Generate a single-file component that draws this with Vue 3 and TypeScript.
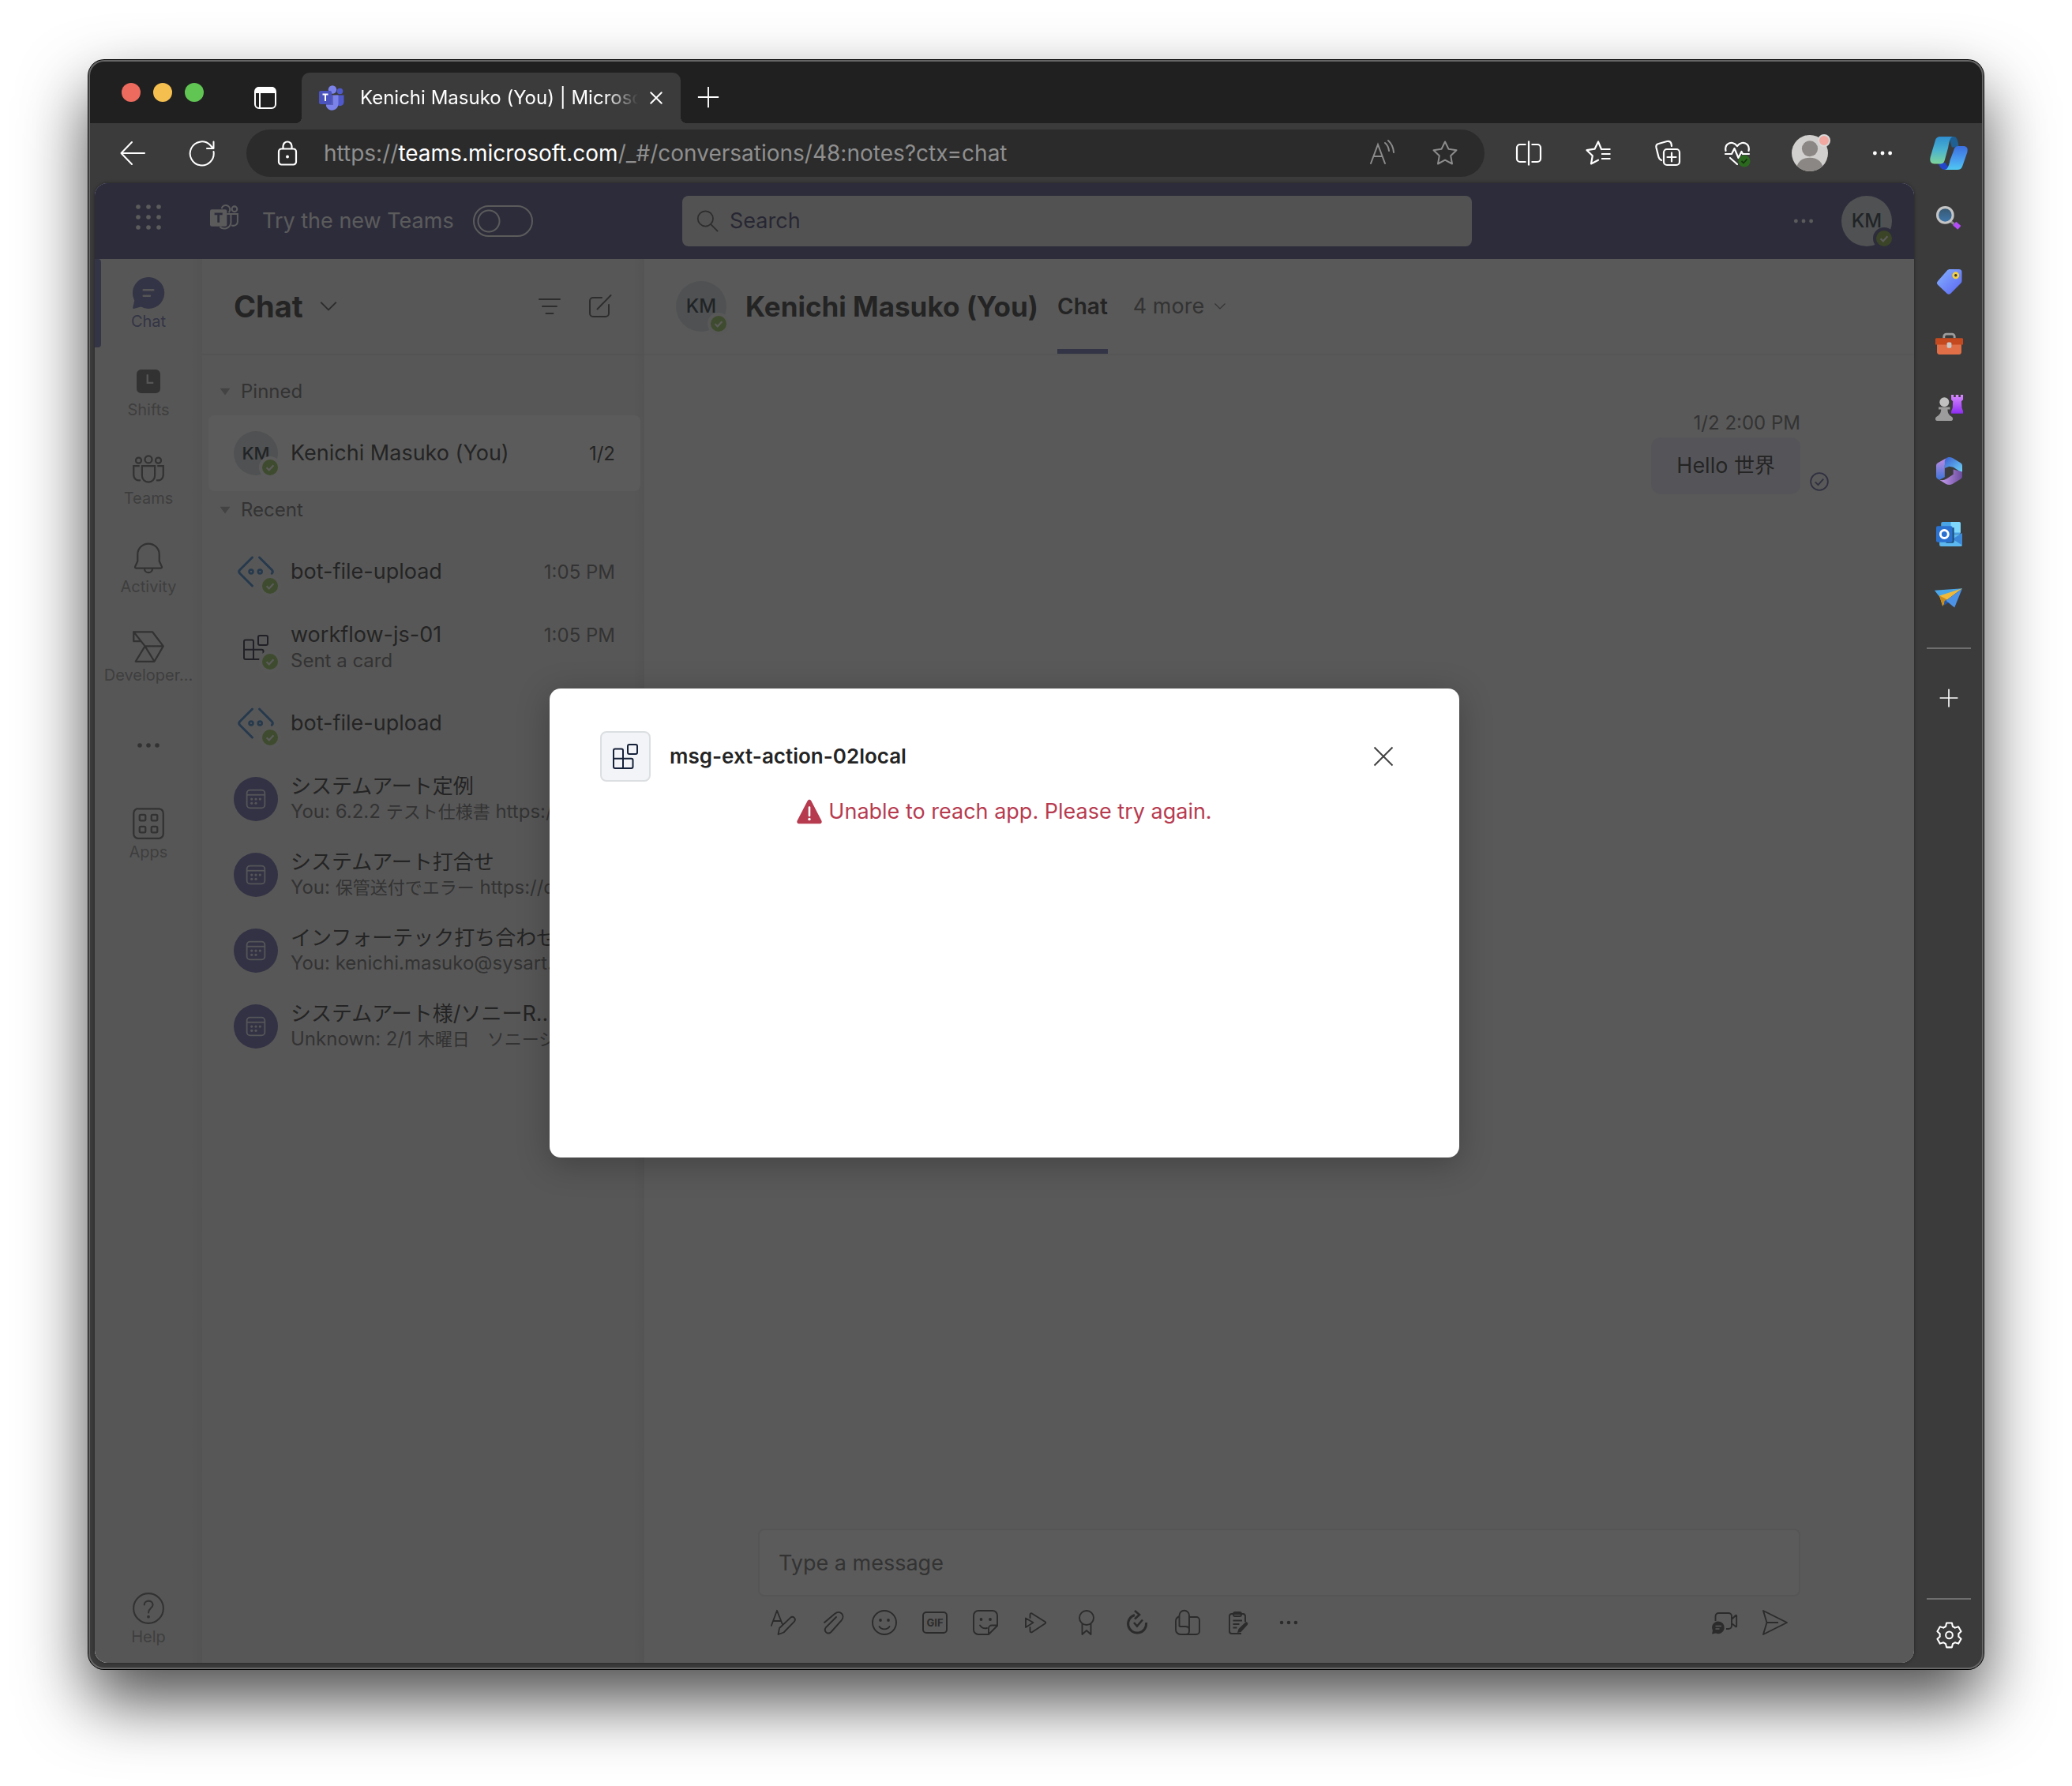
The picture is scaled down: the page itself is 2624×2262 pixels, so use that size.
<script setup lang="ts">
import { ref } from 'vue'

interface RailItem { id: string; label: string; icon: string; active?: boolean }
interface Chat {
  id: number
  avatar: 'initials' | 'bot' | 'app' | 'meeting'
  title: string
  preview?: string
  time?: string
}
interface Run { text: string; ja: boolean }

// Every glyph is drawn on a 32 x 32 grid and inherits currentColor.
const icons: Record<string, string> = {
  tabs: '<rect x="3" y="3" width="26" height="26" rx="5" fill="none" stroke="currentColor" stroke-width="2"/><path d="M3 10V7a5 5 0 0 1 5-5h16a5 5 0 0 1 5 5v3z" fill="currentColor"/><path d="M9 10v18" stroke="currentColor" stroke-width="2"/>',
  teamsColor: '<circle cx="26.500" cy="7.500" r="3.800" fill="#5059c9"/><path d="M21 12.500h10.500v9a5 5 0 0 1-7.500 4z" fill="#5059c9"/><circle cx="17" cy="5.500" r="5.200" fill="#7b83eb"/><path d="M9 12.500h15.500v11a8 8 0 0 1-15.500 3z" fill="#7b83eb"/><path d="M10 12.500h8v12.500H9z" fill="#454a9c" opacity=".6"/><rect x="0" y="7" width="16" height="17" rx="2" fill="#4b53bc"/><path d="M4.500 11.500h7M8 11.500V20" stroke="#fff" stroke-width="2"/>',
  close: '<path d="M4 4l24 24M28 4L4 28" stroke="currentColor" stroke-width="3.500" stroke-linecap="round"/>',
  closeThin: '<path d="M4.500 4.500l23 23M27.500 4.500l-23 23" stroke="currentColor" stroke-width="2"/>',
  plus: '<path d="M16 2v28M2 16h28" stroke="currentColor" stroke-width="2"/>',
  back: '<path d="M31 16H1.500M15 2L1.500 16 15 30" fill="none" stroke="currentColor" stroke-width="2" stroke-linecap="round" stroke-linejoin="round"/>',
  refresh: '<path d="M30.500 14A15 15 0 1 1 26 5.500l4 4.500M30.500 1.500V10H22" fill="none" stroke="currentColor" stroke-width="2" stroke-linecap="round" stroke-linejoin="round"/>',
  lock: '<rect x="5" y="10.500" width="22" height="20" rx="3.500" fill="none" stroke="currentColor" stroke-width="2.200"/><path d="M10.500 10.500V7a5.500 5.500 0 0 1 11 0v3.500" fill="none" stroke="currentColor" stroke-width="2.200"/><circle cx="16" cy="20.500" r="2" fill="currentColor"/>',
  readAloud: '<path d="M2 29L11 5l9 24M5.500 20h11M20 3c3 2.500 4.500 5.500 5 10M24 0c4.500 4 6.500 8 7 15" fill="none" stroke="currentColor" stroke-width="2" stroke-linecap="round"/>',
  star: '<path d="M16 1.500l4.500 9.200 10 1.500-7.300 7.100 1.800 10.200-9-4.800-9 4.800 1.800-10.200-7.300-7.100 10-1.500z" fill="none" stroke="currentColor" stroke-width="2" stroke-linejoin="round"/>',
  split: '<path d="M12.500 5H5a4 4 0 0 0-4 4v14a4 4 0 0 0 4 4h7.500M19.500 5H27a4 4 0 0 1 4 4v14a4 4 0 0 1-4 4h-7.500M16 .5v31" fill="none" stroke="currentColor" stroke-width="2.200"/>',
  favorites: '<path d="M20 11l-4-9.500-4.500 9.200-10 1.500 7.300 7.100L7 29.500l9-4.800" fill="none" stroke="currentColor" stroke-width="2.200" stroke-linejoin="round" stroke-linecap="round"/><path d="M20 11h11.500M20 17h11.500M20 23h11.500" stroke="currentColor" stroke-width="2.200"/>',
  collections: '<rect x="11" y="11" width="20" height="20" rx="4" fill="none" stroke="currentColor" stroke-width="2.200"/><path d="M21 15.500v11M15.500 21h11M8 25c-2-1-3-2-3.500-4L1.500 9c-.5-2.500.5-4.500 3-5L15 1c3-.6 4.800.4 5.500 3L21 7" fill="none" stroke="currentColor" stroke-width="2.200" stroke-linecap="round"/>',
  health: '<path d="M1.500 13C0 6 5 2 10 3c3 .7 4.500 2 6 4 1.500-2 3-3.300 6-4 5-1 10 3 8.500 10M1 17h8l3.500-7 5 12 4-8 1.500 3h8M7 22l9 8" fill="none" stroke="currentColor" stroke-width="2.200" stroke-linejoin="round" stroke-linecap="round"/><circle cx="25" cy="26" r="7.500" fill="#2b6a1e"/><path d="M21.500 26l2.500 2.500 4.500-5" fill="none" stroke="#16330f" stroke-width="1.800"/>',
  dots: '<g fill="currentColor"><circle cx="5" cy="16" r="2.800"/><circle cx="16" cy="16" r="2.800"/><circle cx="27" cy="16" r="2.800"/></g>',
  person: '<defs><clipPath id="pc"><circle cx="16" cy="16" r="16"/></clipPath></defs><g clip-path="url(#pc)"><rect width="32" height="32" fill="#d2d0ce"/><circle cx="16" cy="12" r="7" fill="#8a8784"/><path d="M4 32c0-8 5-12 12-12s12 4 12 12z" fill="#8a8784"/></g>',
  copilot: '<defs><linearGradient id="c1" x1="0" y1="0" x2="0" y2="1"><stop offset="0" stop-color="#2f8fd0"/><stop offset=".5" stop-color="#4bb3d0"/><stop offset="1" stop-color="#7ed49a"/></linearGradient><linearGradient id="c2" x1="0" y1="0" x2="0" y2="1"><stop offset="0" stop-color="#3c6fe0"/><stop offset=".6" stop-color="#4aa0f0"/><stop offset="1" stop-color="#4fc8f0"/></linearGradient></defs><path d="M16 2h4c3 0 3.500 3 4.500 9h-6z" fill="#1f5f92"/><path d="M7 24h6l4 6h-4c-3.500 0-4.500-2-6-6z" fill="#2347c8"/><path d="M9 2h11c-3 0-3.500 4-4.500 9l-3 11c-.6 2-1.500 3-4 3H4c-3 0-4.500-2-3.500-6L4.500 5.500C5.200 3 6.500 2 9 2z" fill="url(#c1)"/><path d="M23 30H12c3 0 4-3 5-8l3-8c.6-2 1.500-4 4-4h4c3 0 4.500 1.500 3.500 5.500L27.500 27c-.7 2-2 3-4.500 3z" fill="url(#c2)"/>',
  grid: '<g fill="currentColor"><circle cx="3" cy="3" r="2.800"/><circle cx="16" cy="3" r="2.800"/><circle cx="29" cy="3" r="2.800"/><circle cx="3" cy="16" r="2.800"/><circle cx="16" cy="16" r="2.800"/><circle cx="29" cy="16" r="2.800"/><circle cx="3" cy="29" r="2.800"/><circle cx="16" cy="29" r="2.800"/><circle cx="29" cy="29" r="2.800"/></g>',
  teamsMono: '<g fill="none" stroke="currentColor" stroke-width="1.800"><path d="M13 5.500a4.800 4.800 0 1 1 8 4.500M11 26a7.500 7.500 0 0 0 12.500-4.500V11.500H19"/><circle cx="27.500" cy="6" r="3"/><path d="M24 11.500h7v9c0 3-3 5-7 4"/></g><rect x="0" y="6.500" width="19" height="19" rx="2" fill="currentColor"/><path d="M5 11.500h9M9.500 11.500V21" stroke="#464380" stroke-width="2.500"/>',
  search: '<circle cx="13" cy="12.500" r="11" fill="none" stroke="currentColor" stroke-width="2"/><path d="M20.500 20.500L31 31" stroke="currentColor" stroke-width="2"/>',
  chat: '<path d="M16 0a16 16 0 1 1-7.500 30L1 32c-.8 0-1-.6-.8-1.200L1.800 23.500A16 16 0 0 1 16 0z" fill="currentColor"/><path d="M11 13h10M11 19h6.500" stroke="#ebebeb" stroke-width="2" stroke-linecap="round"/>',
  shifts: '<rect x="4" y="4" width="24" height="24" rx="4.500" fill="currentColor"/><path d="M15 9v8.500h6" fill="none" stroke="#ebebeb" stroke-width="1.800"/>',
  teams: '<g fill="none" stroke="currentColor" stroke-width="1.800"><circle cx="16" cy="5.500" r="3.600"/><circle cx="6" cy="6.500" r="2.800"/><circle cx="26" cy="6.500" r="2.800"/><path d="M9.500 12h13v10a6.500 6.500 0 0 1-13 0zM7 12H1v9c0 4 3 6.500 7 5.500M25 12h6v9c0 4-3 6.500-7 5.500"/></g>',
  bell: '<path d="M16 1.200a11 11 0 0 0-11 11V19l-2.500 5.500c-.3.800 0 1.500 1 1.500h25c1 0 1.300-.7 1-1.500L27 19v-6.800a11 11 0 0 0-11-11zM12 26.500a4 4 0 0 0 8 0" fill="none" stroke="currentColor" stroke-width="1.800" stroke-linejoin="round"/>',
  developer: '<path d="M1 1h19l11 14.500-9 15.500H3l9.500-15.500L1 1v9.500h7.500M12.500 15.500H31M12.500 15.500L22 31" fill="none" stroke="currentColor" stroke-width="1.800" stroke-linejoin="round"/>',
  apps: '<rect x="1" y="1" width="30" height="30" rx="4.500" fill="none" stroke="currentColor" stroke-width="1.800"/><g fill="none" stroke="currentColor" stroke-width="1.800"><rect x="7" y="7" width="6" height="6" rx="1.200"/><rect x="19" y="7" width="6" height="6" rx="1.200"/><rect x="7" y="19" width="6" height="6" rx="1.200"/><rect x="19" y="19" width="6" height="6" rx="1.200"/></g>',
  help: '<circle cx="16" cy="16" r="15.100" fill="none" stroke="currentColor" stroke-width="1.700"/><path d="M11.800 12.300c0-5 8.600-5.200 8.600 0 0 3.400-4.400 3.800-4.400 8" fill="none" stroke="currentColor" stroke-width="1.700" stroke-linecap="round"/><circle cx="16" cy="24.500" r="1.500" fill="currentColor"/>',
  chevron: '<path d="M3 9l13 13L29 9" fill="none" stroke="currentColor" stroke-width="2.400"/>',
  triangle: '<path d="M1 6h30L16 26z" fill="currentColor"/>',
  filter: '<path d="M3 7h26M7 16h18M11.500 25h9" stroke="currentColor" stroke-width="2" stroke-linecap="round"/>',
  compose: '<path d="M18 5H7a4 4 0 0 0-4 4v16a4 4 0 0 0 4 4h16a4 4 0 0 0 4-4V14M12.500 19.500L29.500 2" fill="none" stroke="currentColor" stroke-width="2" stroke-linecap="round"/>',
  bot: '<path d="M13 4L2.500 14.500c-1 1-1 2 0 3L13 28M19 4l10.500 10.500c1 1 1 2 0 3" fill="none" stroke="currentColor" stroke-width="2" stroke-linecap="round"/><g fill="none" stroke="currentColor" stroke-width="1.800"><circle cx="12" cy="16" r="1.600"/><circle cx="19.500" cy="16" r="1.600"/></g>',
  blocks: '<g fill="none" stroke="currentColor" stroke-width="2" stroke-linejoin="round"><rect x="19" y="1" width="12" height="12" rx="2"/><path d="M13 18.700V8.500a2 2 0 0 0-2-2H3a2 2 0 0 0-2 2V29a2 2 0 0 0 2 2h20.500a2 2 0 0 0 2-2v-8.300a2 2 0 0 0-2-2H1M13 18.700V31"/></g>',
  calendar: '<rect x="2" y="2" width="28" height="28" rx="5" fill="none" stroke="currentColor" stroke-width="2.200"/><path d="M2 9.500h28" stroke="currentColor" stroke-width="2.200"/><g fill="currentColor"><circle cx="9.500" cy="16" r="2"/><circle cx="16" cy="16" r="2"/><circle cx="22.500" cy="16" r="2"/><circle cx="9.500" cy="22.500" r="2"/><circle cx="16" cy="22.500" r="2"/></g>',
  check: '<path d="M9 16.500l5 5 9-10" fill="none" stroke="currentColor" stroke-width="3.500"/>',
  sent: '<circle cx="16" cy="16" r="14.500" fill="none" stroke="currentColor" stroke-width="2.400"/><path d="M9 16.500l5 5 9-10" fill="none" stroke="currentColor" stroke-width="2.400"/>',
  warning: '<path d="M13.700 2.200c1-2 3.600-2 4.600 0l13 25c1 2 0 4-2 4H2.700c-2 0-3-2-2-4z" fill="currentColor"/><path d="M16 10.500v10.500" stroke="#fff" stroke-width="2.600" stroke-linecap="round"/><circle cx="16" cy="25.500" r="1.700" fill="#fff"/>',
  format: '<path d="M.8 20L8 .8 14.800 18M3.500 14h9.500M9.500 31l1.600-8L25 9.800c3.500-2.800 7.700 1.500 5 4.800L16.500 28.500z" fill="none" stroke="currentColor" stroke-width="1.800" stroke-linejoin="round" stroke-linecap="round"/>',
  attach: '<path d="M4 16L17 5c7-6 14 2 8.500 8.500L12.500 28c-4.500 4-10-1-6.500-6L19 9" fill="none" stroke="currentColor" stroke-width="1.900" stroke-linecap="round"/>',
  emoji: '<circle cx="16" cy="16" r="15" fill="none" stroke="currentColor" stroke-width="1.900"/><circle cx="11" cy="13" r="1.900" fill="currentColor"/><circle cx="21" cy="13" r="1.900" fill="currentColor"/><path d="M9.500 21c3 4.500 10 4.500 13 0" fill="none" stroke="currentColor" stroke-width="1.900" stroke-linecap="round"/>',
  sticker: '<path d="M7 1h18a6 6 0 0 1 6 6v13L20 31H7a6 6 0 0 1-6-6V7a6 6 0 0 1 6-6zM31 19.500h-7a4 4 0 0 0-4 4V31M9 19.500c2 3 5.500 4.300 9 3.500" fill="none" stroke="currentColor" stroke-width="1.900" stroke-linecap="round"/><circle cx="10.500" cy="12" r="1.900" fill="currentColor"/><circle cx="22" cy="12" r="1.900" fill="currentColor"/>',
  stream: '<path d="M8.500 10V6c0-1.600 1.500-2.200 2.700-1.300L27.500 15c1 .7 1 1.500 0 2.200L11.200 28c-1.200.8-2.700.2-2.700-1.300V22M3 10.500v11.500l9.500-6z" fill="none" stroke="currentColor" stroke-width="1.900" stroke-linejoin="round" stroke-linecap="round"/>',
  praise: '<circle cx="16" cy="10" r="9" fill="none" stroke="currentColor" stroke-width="1.900"/><path d="M10.500 17.500V31l5.500-5 5.500 5V17.500" fill="none" stroke="currentColor" stroke-width="1.900" stroke-linejoin="round"/>',
  loop: '<path d="M13 6.500A11.500 11.500 0 1 0 27.500 16" fill="none" stroke="currentColor" stroke-width="3"/><path d="M13 1l6 5-6 5.500M12 16l4 4.500 7-8" fill="none" stroke="currentColor" stroke-width="2.600"/>',
  approvals: '<g fill="none" stroke="currentColor" stroke-width="1.900"><path d="M18 9h9a4 4 0 0 1 4 4v14a4 4 0 0 1-4 4H7a6 6 0 0 1-6-6V14a6 6 0 0 1 4.500-5.500"/><path d="M5.500 21V7a6 6 0 0 1 12.500 0v20a4 4 0 0 1-4 4M5.500 21H13c3 0 5 1.500 5 4"/></g>',
  clipboard: '<path d="M20 30H8a3 3 0 0 1-3-3V8a3 3 0 0 1 3-3h14a3 3 0 0 1 3 3v7" fill="none" stroke="currentColor" stroke-width="1.900"/><rect x="10" y="3" width="10" height="5" rx="2" fill="none" stroke="currentColor" stroke-width="1.900"/><path d="M9.500 13.500H21M9.500 18h8M9.500 22.500h5" stroke="currentColor" stroke-width="1.900"/><path d="M15 29l1.500-5L25 15.800c1.500-1.500 4.500 1 3 3L19.500 28z" fill="currentColor"/>',
  video: '<path d="M4.500 14V8a4 4 0 0 1 4-4h12.500a4 4 0 0 1 4 4v12a4 4 0 0 1-4 4H18M25 12l5-5c.6-.5 1.200-.2 1.200.6v13c0 .8-.6 1-1.200.5L25 17" fill="none" stroke="currentColor" stroke-width="1.900"/><path d="M8 14.500a7.800 7.800 0 1 1-3 15L0 30.500l1-4.500A7.800 7.800 0 0 1 8 14.500z" fill="currentColor"/><path d="M4.500 20.500h7.500M4.500 24h5" stroke="#f5f5f5" stroke-width="1.500"/>',
  send: '<path d="M1 1l30 15L1 31l4.500-15zM5.500 16H20" fill="none" stroke="currentColor" stroke-width="1.900" stroke-linejoin="round"/>',
  magnifier: '<defs><linearGradient id="m1" x1="0" y1="0" x2="0" y2="1"><stop offset="0" stop-color="#37566e"/><stop offset="1" stop-color="#3f78ad"/></linearGradient></defs><path d="M18 20l4 3" stroke="#8a8a8a" stroke-width="3"/><path d="M22.500 22.500l6 5" stroke="#b24cf5" stroke-width="6"/><circle cx="11" cy="12" r="9.500" fill="url(#m1)" stroke="#c4c4c4" stroke-width="3"/>',
  tag: '<defs><linearGradient id="t1" x1="0" y1="0" x2="1" y2="1"><stop offset="0" stop-color="#86b4ff"/><stop offset="1" stop-color="#5a63f2"/></linearGradient></defs><path d="M17 1h11a3.500 3.500 0 0 1 3.500 3.500V15c0 1.500-.5 2.500-1.500 3.500L18 30.500c-1.500 1.600-3.500 1.600-5 0L2 20c-1.500-1.500-1.400-3 0-4.500L13.500 2.500C14.500 1.500 15.500 1 17 1z" fill="url(#t1)"/><circle cx="24" cy="8.500" r="3" fill="#3a3a3a" stroke="#f4cf3c" stroke-width="2.600"/>',
  toolbox: '<path d="M9.500 8V6a3 3 0 0 1 3-3h7a3 3 0 0 1 3 3v2" fill="none" stroke="#9d9d9d" stroke-width="2.800"/><path d="M1 14h30v11a3 3 0 0 1-3 3H4a3 3 0 0 1-3-3z" fill="#e06f47"/><path d="M-1 9.500C-1 8.500-.4 8 .5 8h31c1 0 1.500.6 1.500 1.500V16H-1z" fill="#c4491f"/><rect x="13.200" y="13" width="5.600" height="7" rx="1.500" fill="#c8c8c8"/>',
  chess: '<defs><linearGradient id="h1" x1="0" y1="0" x2="0" y2="1"><stop offset="0" stop-color="#d98bff"/><stop offset="1" stop-color="#8d2df2"/></linearGradient></defs><path d="M18.500 0h3v3h2.500V0h3.500v3H30V0h3v6l-2 2 .5 8 1.500 4v3H18.500v-3l1.700-4L20.500 8l-2-2z" fill="url(#h1)"/><circle cx="10" cy="9" r="5.800" fill="#c0c0c0"/><path d="M3 15h14v3h-3c0 5 2 7 5 9 2 1.300 2 5-.5 5H1c-2.500 0-2.500-3.700-.5-5 3-2 5.500-4 5.500-9H3z" fill="#9c9c9c"/>',
  m365: '<defs><linearGradient id="o1" x1="0" y1="0" x2="0" y2="1"><stop offset="0" stop-color="#c08be0"/><stop offset="1" stop-color="#3b74d8"/></linearGradient><linearGradient id="o2" x1="0" y1="0" x2="1" y2="1"><stop offset="0" stop-color="#3a5fd0"/><stop offset="1" stop-color="#6fd6f8"/></linearGradient><linearGradient id="o3" x1="0" y1="0" x2="1" y2="0"><stop offset="0" stop-color="#c9a0f2"/><stop offset="1" stop-color="#6b4a9c"/></linearGradient></defs><path d="M12 .5L2 6C.7 7 0 8 0 9.500v13C0 24 .7 25 2 26l2 1 6.500-3.500V9z" fill="url(#o1)"/><path d="M12 .5c2-1.500 5-2 8-.5l10 6c1.300 1 2 2 2 3.500v9L21 11.500l-5-1-5.500 2V3z" fill="url(#o2)"/><path d="M32 17v5.500c0 1.500-.7 2.500-2 3.500l-10 6c-2.500 1.300-5.500 1.300-8 0l-8-5c4 1 6 0 9-1.500L21 20v-6z" fill="url(#o3)"/>',
  outlook: '<rect x="6" y="1" width="24" height="15" rx="2" fill="#4aa4e8"/><path d="M18 1h10a2 2 0 0 1 2 2v11H18z" fill="#7fd8fb"/><path d="M4 16h28v13a2 2 0 0 1-2 2H6a2 2 0 0 1-2-2z" fill="#5cb8ee"/><path d="M32 14.500v15L20 22z" fill="#3c88d8"/><path d="M17 8h5v17a2 2 0 0 1-2 2h-8z" fill="#1d4f7c"/><rect x="0" y="6" width="20" height="20" rx="2" fill="#2b72d0"/><circle cx="10" cy="16" r="4.800" fill="none" stroke="#fff" stroke-width="2.800"/>',
  plane: '<path d="M-2 7.500L32 5 14 16l-8 2z" fill="#4aa6e8"/><path d="M4 14L32 5 12 20l-4 7z" fill="#f0b93a"/><path d="M12 18l-4 9-4-13z" fill="#c98a1c"/><path d="M10 21l2.500-2.500 3 3.500-6 4z" fill="#2257a8"/><path d="M32 5L22.500 28.500 12 20z" fill="#4c93e8"/>',
  gear: '<path d="M12.700 1.500h6.600l1 4.300c1 .4 2 1 2.800 1.600l4.200-1.300 3.300 5.700-3.200 3a10 10 0 0 1 0 3.300l3.200 3-3.300 5.700-4.200-1.300c-.9.700-1.800 1.200-2.800 1.600l-1 4.300h-6.600l-1-4.300c-1-.4-2-1-2.800-1.600l-4.200 1.300-3.300-5.700 3.200-3a10 10 0 0 1 0-3.300l-3.200-3 3.300-5.700 4.200 1.300c.9-.7 1.800-1.200 2.800-1.600z" fill="none" stroke="currentColor" stroke-width="2" stroke-linejoin="round"/><circle cx="16" cy="16.400" r="4.200" fill="none" stroke="currentColor" stroke-width="2"/>',
}

const browserTools = [
  { icon: 'split', label: 'Split screen' },
  { icon: 'favorites', label: 'Favorites' },
  { icon: 'collections', label: 'Collections' },
  { icon: 'health', label: 'Browser essentials' },
]

const sidebarApps = [
  { icon: 'magnifier', label: 'Search' },
  { icon: 'tag', label: 'Shopping' },
  { icon: 'toolbox', label: 'Tools' },
  { icon: 'chess', label: 'Games' },
  { icon: 'm365', label: 'Microsoft 365' },
  { icon: 'outlook', label: 'Outlook' },
  { icon: 'plane', label: 'Drop' },
]

const railItems: RailItem[] = [
  { id: 'chat', label: 'Chat', icon: 'chat', active: true },
  { id: 'shifts', label: 'Shifts', icon: 'shifts' },
  { id: 'teams', label: 'Teams', icon: 'teams' },
  { id: 'activity', label: 'Activity', icon: 'bell' },
  { id: 'developer', label: 'Developer...', icon: 'developer' },
  { id: 'more', label: '', icon: 'dots' },
  { id: 'apps', label: 'Apps', icon: 'apps' },
]

const pinned: Chat[] = [
  { id: 1, avatar: 'initials', title: 'Kenichi Masuko (You)', time: '1/2' },
]

const recent: Chat[] = [
  { id: 2, avatar: 'bot', title: 'bot-file-upload', time: '1:05 PM' },
  { id: 3, avatar: 'app', title: 'workflow-js-01', preview: 'Sent a card', time: '1:05 PM' },
  { id: 4, avatar: 'bot', title: 'bot-file-upload' },
  { id: 5, avatar: 'meeting', title: 'システムアート定例', preview: 'You: 6.2.2 テスト仕様書 https://' },
  { id: 6, avatar: 'meeting', title: 'システムアート打合せ', preview: 'You: 保管送付でエラー https://d' },
  { id: 7, avatar: 'meeting', title: 'インフォーテック打ち合わせ', preview: 'You: kenichi.masuko@sysart.j' },
  { id: 8, avatar: 'meeting', title: 'システムアート様/ソニーR...', preview: 'Unknown: 2/1 木曜日　ソニージ' },
]

const sections = [
  { name: 'Pinned', chats: pinned },
  { name: 'Recent', chats: recent },
]

const composeTools = ['format', 'attach', 'emoji', 'gif', 'sticker', 'stream', 'praise', 'loop', 'approvals', 'clipboard', 'dots']

// Japanese runs are set slightly smaller than the Latin text around them.
function runs(text: string): Run[] {
  return text
    .split(/([\u3000-\u9fff]+)/)
    .filter(Boolean)
    .map((part) => ({ text: part, ja: /^[\u3000-\u9fff]/.test(part) }))
}

const selectedChat = ref(1)
const newTeams = ref(false)
const query = ref('')
const draft = ref('')
const dialogOpen = ref(true)
</script>

<template>
  <div class="desktop">
    <div class="window">
      <header class="tab-strip">
        <div class="lights"><i class="red" /><i class="amber" /><i class="green" /></div>
        <button class="tab-actions" aria-label="Tab actions"><svg viewBox="0 0 32 32" v-html="icons.tabs" /></button>
        <div class="tab">
          <svg class="i32" viewBox="0 0 32 32" v-html="icons.teamsColor" />
          <span class="tab-title">Kenichi Masuko (You) | Microso</span>
          <button class="tab-close" aria-label="Close tab"><svg viewBox="0 0 32 32" v-html="icons.close" /></button>
        </div>
        <button class="new-tab" aria-label="New tab"><svg viewBox="0 0 32 32" v-html="icons.plus" /></button>
      </header>

      <nav class="toolbar">
        <button class="tool" aria-label="Back"><svg class="i32" viewBox="0 0 32 32" v-html="icons.back" /></button>
        <button class="tool" aria-label="Refresh"><svg class="i32" viewBox="0 0 32 32" v-html="icons.refresh" /></button>
        <div class="address">
          <svg class="lock" viewBox="0 0 32 32" v-html="icons.lock" />
          <div class="url" role="textbox" aria-label="Address" contenteditable="false">https://<b>teams.microsoft.com</b>/_#/conversations/48:notes?ctx=chat</div>
          <button class="faint" aria-label="Read aloud"><svg class="i32" viewBox="0 0 32 32" v-html="icons.readAloud" /></button>
          <button class="faint" aria-label="Add to favorites"><svg class="i32" viewBox="0 0 32 32" v-html="icons.star" /></button>
        </div>
        <button v-for="t in browserTools" :key="t.icon" class="tool" :aria-label="t.label">
          <svg class="i32" viewBox="0 0 32 32" v-html="icons[t.icon]" />
        </button>
        <button class="tool profile" aria-label="Profile"><svg viewBox="0 0 32 32" v-html="icons.person" /><i /></button>
        <button class="tool" aria-label="Settings and more"><svg class="i28" viewBox="0 0 32 32" v-html="icons.dots" /></button>
        <button class="copilot" aria-label="Copilot"><svg viewBox="0 0 32 32" v-html="icons.copilot" /></button>
      </nav>

      <div class="body">
        <div class="page">
          <div class="app-bar">
            <div class="brand">
              <button class="launcher" aria-label="App launcher"><svg class="i32" viewBox="0 0 32 32" v-html="icons.grid" /></button>
              <svg class="logo" viewBox="0 0 32 32" v-html="icons.teamsMono" />
              <label class="switch">Try the new Teams<input v-model="newTeams" type="checkbox" role="switch"></label>
            </div>
            <label class="search">
              <svg class="i28" viewBox="0 0 32 32" v-html="icons.search" />
              <input v-model="query" type="search" placeholder="Search" aria-label="Search">
            </label>
            <div class="account">
              <button aria-label="More options"><svg class="i28" viewBox="0 0 32 32" v-html="icons.dots" /></button>
              <span class="avatar large on-bar">KM<i class="presence"><svg viewBox="0 0 32 32" v-html="icons.check" /></i></span>
            </div>
          </div>

          <div class="columns">
            <nav class="rail">
              <button v-for="item in railItems" :key="item.id" class="rail-item" :class="{ active: item.active, more: !item.label }" :aria-label="item.label || 'More apps'">
                <svg viewBox="0 0 32 32" v-html="icons[item.icon]" />
                <span v-if="item.label">{{ item.label }}</span>
              </button>
              <button class="rail-item help"><svg viewBox="0 0 32 32" v-html="icons.help" /><span>Help</span></button>
            </nav>

            <aside class="list">
              <div class="list-head">
                <h1>Chat</h1>
                <button aria-label="Chat menu"><svg class="chev" viewBox="0 0 32 32" v-html="icons.chevron" /></button>
                <span class="grow" />
                <button aria-label="Filter"><svg class="i32" viewBox="0 0 32 32" v-html="icons.filter" /></button>
                <button aria-label="New chat"><svg class="i32" viewBox="0 0 32 32" v-html="icons.compose" /></button>
              </div>
              <div class="chats">
                <section v-for="s in sections" :key="s.name">
                  <h2><svg viewBox="0 0 32 32" v-html="icons.triangle" />{{ s.name }}</h2>
                  <button v-for="c in s.chats" :key="c.id" class="row" :class="{ selected: c.id === selectedChat }" @click="selectedChat = c.id">
                    <span class="avatar" :class="c.avatar">
                      <template v-if="c.avatar === 'initials'">KM</template>
                      <svg v-else-if="c.avatar === 'bot'" viewBox="0 0 32 32" v-html="icons.bot" />
                      <svg v-else-if="c.avatar === 'app'" viewBox="0 0 32 32" v-html="icons.blocks" />
                      <svg v-else viewBox="0 0 32 32" v-html="icons.calendar" />
                      <i v-if="c.avatar !== 'meeting'" class="presence"><svg viewBox="0 0 32 32" v-html="icons.check" /></i>
                    </span>
                    <span class="text">
                      <span class="line">
                        <span class="name"><span v-for="(r, i) in runs(c.title)" :key="i" :class="{ ja: r.ja }">{{ r.text }}</span></span>
                        <time v-if="c.time">{{ c.time }}</time>
                      </span>
                      <span v-if="c.preview" class="preview"><span v-for="(r, i) in runs(c.preview)" :key="i" :class="{ ja: r.ja }">{{ r.text }}</span></span>
                    </span>
                  </button>
                </section>
              </div>
            </aside>

            <main class="conversation">
              <div class="conv-head">
                <span class="avatar large">KM<i class="presence"><svg viewBox="0 0 32 32" v-html="icons.check" /></i></span>
                <h2>Kenichi Masuko (You)</h2>
                <button class="conv-tab">Chat</button>
                <button class="conv-more">4 more<svg viewBox="0 0 32 32" v-html="icons.chevron" /></button>
              </div>
              <div class="messages">
                <time>1/2 2:00 PM</time>
                <div class="message">
                  <p>Hello <span class="ja">世界</span></p>
                  <svg viewBox="0 0 32 32" v-html="icons.sent" />
                </div>
              </div>
              <div class="composer">
                <input v-model="draft" type="text" placeholder="Type a message" aria-label="Type a message">
                <div class="tools">
                  <button v-for="t in composeTools" :key="t" :aria-label="t">
                    <span v-if="t === 'gif'" class="gif">GIF</span>
                    <svg v-else :class="t === 'dots' ? 'i26' : 'i32'" viewBox="0 0 32 32" v-html="icons[t]" />
                  </button>
                  <span class="grow" />
                  <button aria-label="Record video clip"><svg class="i32" viewBox="0 0 32 32" v-html="icons.video" /></button>
                  <button aria-label="Send"><svg class="i32" viewBox="0 0 32 32" v-html="icons.send" /></button>
                </div>
              </div>
            </main>
          </div>

          <div v-if="dialogOpen" class="overlay">
            <section class="dialog" role="dialog" aria-labelledby="dialog-title">
              <div class="dialog-head">
                <span class="app-icon"><svg viewBox="0 0 32 32" v-html="icons.blocks" /></span>
                <h2 id="dialog-title">msg-ext-action-02local</h2>
                <button aria-label="Close" @click="dialogOpen = false"><svg viewBox="0 0 32 32" v-html="icons.closeThin" /></button>
              </div>
              <p class="error" role="alert"><svg class="i32" viewBox="0 0 32 32" v-html="icons.warning" />Unable to reach app. Please try again.</p>
            </section>
          </div>
        </div>

        <aside class="sidebar">
          <button v-for="a in sidebarApps" :key="a.icon" :aria-label="a.label"><svg viewBox="0 0 32 32" v-html="icons[a.icon]" /></button>
          <hr>
          <button class="add" aria-label="Customize"><svg viewBox="0 0 32 32" v-html="icons.plus" /></button>
          <hr class="bottom">
          <button class="settings" aria-label="Settings"><svg viewBox="0 0 32 32" v-html="icons.gear" /></button>
        </aside>
      </div>
    </div>
  </div>
</template>

<style>
body { margin: 0; background: #fff; }
</style>

<style scoped>
* { box-sizing: border-box; }
h1, h2, p { margin: 0; }
button { display: flex; align-items: center; justify-content: center; flex: none; margin: 0; padding: 0; border: 0; background: none; color: inherit; font: inherit; cursor: pointer; }
input { font: inherit; color: inherit; }
svg { display: block; flex: none; overflow: visible; }
.i26 { width: 26px; height: 26px; }
.i28 { width: 28px; height: 28px; }
.i32 { width: 32px; height: 32px; }
.grow { flex: 1; }
.ja { font-size: 26px; }

.desktop {
  display: flex;
  min-height: 100vh;
  padding: 76px 112px 148px;
  font: 27px/32px Inter, "Noto Sans CJK JP", sans-serif;
}
.window {
  position: relative;
  display: flex;
  flex: 1;
  flex-direction: column;
  min-width: 0;
  border-radius: 20px;
  background: #3b3b3b;
  color: #fff;
  box-shadow: 0 0 0 1px #000, 0 40px 84px rgba(0, 0, 0, 0.7);
}
.window::after {
  content: "";
  position: absolute;
  inset: 0;
  border-radius: 20px;
  box-shadow: inset 0 0 0 2px #666;
  pointer-events: none;
}

.tab-strip { display: flex; align-items: flex-end; height: 80px; padding-left: 42px; border-radius: 20px 20px 0 0; background: #202020; }
.lights { display: flex; align-items: center; gap: 16px; height: 78px; }
.lights i { width: 24px; height: 24px; border-radius: 50%; }
.red { background: #ed6a5e; }
.amber { background: #f5bf4f; }
.green { background: #61c554; }
.tab-actions { width: 32px; height: 64px; margin: 0 30px 0 62px; }
.tab-actions svg { width: 32px; height: 32px; }
.tab { position: relative; display: flex; align-items: center; width: 480px; height: 64px; padding: 0 22px; border-radius: 10px 10px 0 0; background: #3b3b3b; }
.tab::before, .tab::after { content: ""; position: absolute; bottom: 0; width: 8px; height: 8px; }
.tab::before { left: -8px; background: radial-gradient(circle at 0 0, transparent 8px, #3b3b3b 8px); }
.tab::after { right: -8px; background: radial-gradient(circle at 100% 0, transparent 8px, #3b3b3b 8px); }
.tab-title { flex: 1; min-width: 0; margin: 0 14px 0 20px; white-space: nowrap; font-size: 24px; mask-image: linear-gradient(to right, #000 310px, transparent 352px); }
.tab-close, .tab-close svg { width: 18px; height: 18px; }
.new-tab { height: 66px; margin-left: 20px; }
.new-tab svg { width: 30px; height: 30px; }

.toolbar { display: flex; align-items: center; height: 76px; padding-left: 32px; }
.tool { width: 48px; height: 48px; margin-right: 40px; }
.toolbar > .tool:nth-child(2) { margin-right: 32px; }
.address { display: flex; flex: 1; align-items: center; height: 60px; margin-right: 32px; padding: 0 34px 0 36px; border-radius: 30px; background: #2b2b2b; }
.lock { width: 32px; height: 32px; }
.url { flex: 1; margin-left: 30px; color: #8f8f8f; font-size: 28px; white-space: nowrap; }
.url b { color: #fff; font-weight: 400; }
.faint { margin-left: 48px; color: #8c8c8c; }
.profile { position: relative; width: 56px; }
.profile svg { width: 46px; height: 46px; }
.profile i { position: absolute; top: 0; right: 2px; width: 16px; height: 16px; border: 2px solid #d8d8d8; border-radius: 50%; background: #f0a8a0; }
.profile + .tool { margin-right: 16px; }
.copilot { width: 88px; }
.copilot svg { width: 48px; height: 48px; }

.body { display: flex; flex: 1; min-height: 0; padding-left: 8px; }
.page { position: relative; display: flex; flex: 1; flex-direction: column; min-width: 0; margin-bottom: 8px; overflow: hidden; border-radius: 16px; background: #f5f5f5; color: #242424; box-shadow: 0 0 4px rgba(0, 0, 0, 0.4); }

.app-bar { display: flex; align-items: center; height: 96px; background: #464380; color: #fff; }
.brand { display: flex; align-items: center; width: 744px; padding-left: 48px; }
.launcher { width: 40px; height: 56px; padding-bottom: 10px; }
.logo { width: 36px; height: 36px; margin: 0 30px 8px 58px; }
.switch { display: flex; align-items: center; gap: 24px; }
.switch input { appearance: none; width: 76px; height: 40px; margin: 0; border: 2px solid #fff; border-radius: 20px; background: radial-gradient(circle at 18px 18px, transparent 12px, #fff 13px, #fff 14px, transparent 15px); }
.search { display: flex; flex: 1; align-items: center; gap: 14px; height: 64px; padding: 0 18px; border-radius: 8px; background: #d9d9dc; color: #484848; }
.search input { flex: 1; min-width: 0; padding: 0; border: 0; outline: 0; background: none; }
.search input::placeholder { color: #33305f; opacity: 1; }
.account { display: flex; align-items: center; justify-content: flex-end; gap: 34px; width: 560px; padding-right: 28px; }

.avatar { position: relative; display: flex; flex: none; align-items: center; justify-content: center; width: 56px; height: 56px; border-radius: 50%; font-size: 22px; font-weight: 500; color: #16262e; }
.avatar.large, .avatar.initials { background: #d0d6dc; }
.avatar.large { width: 64px; height: 64px; font-size: 24px; }
.presence { position: absolute; right: -4px; bottom: -4px; display: flex; align-items: center; justify-content: center; width: 28px; height: 28px; border: 4px solid #f3f3f3; border-radius: 50%; background: #8cbf4c; color: #fff; }
.presence svg { width: 20px; height: 20px; }
.on-bar .presence { border-color: #464380; background: #7fa32f; }
.selected .presence { border-color: #fff; }
.avatar.bot { color: #2f78c8; }
.avatar.bot > svg { width: 48px; height: 48px; }
.avatar.app { color: #16162e; }
.avatar.app > svg { width: 32px; height: 32px; }
.avatar.meeting { background: #5b5ca5; color: #e8e8f4; }
.avatar.meeting > svg { width: 26px; height: 26px; }

.columns { display: flex; flex: 1; min-height: 0; }
.rail { display: flex; flex-direction: column; width: 136px; background: linear-gradient(to right, #ebebeb 120px, #e0e0e0); color: #5c5c5c; }
.rail-item { position: relative; flex-direction: column; justify-content: flex-start; gap: 4px; width: 136px; height: 112px; padding-top: 23px; }
.rail-item svg { width: 40px; height: 40px; }
.rail-item span { color: #8c8c8c; font-size: 20px; line-height: 24px; }
.rail-item.more { justify-content: center; padding: 0; }
.rail-item.more svg { width: 32px; height: 32px; }
.rail-item.active, .rail-item.active span { color: #6264a7; }
.rail-item.active::before { content: ""; position: absolute; top: 0; left: 0; width: 8px; height: 112px; border-radius: 0 4px 4px 0; background: #6264a7; }
.help { margin-top: auto; }

.list { display: flex; flex-direction: column; width: 560px; background: linear-gradient(to right, #f0f0f0 544px, #e2e2e2); }
.list-head { display: flex; align-items: center; height: 122px; padding: 0 40px; border-bottom: 2px solid #e0e0e0; color: #484848; }
.list-head h1 { color: #242424; font-size: 38px; line-height: 44px; font-weight: 700; }
.list-head button + button { margin-left: 32px; }
.chev { width: 24px; height: 24px; margin-left: 20px; }
.chats { padding: 22px 5px 0 8px; }
.chats h2 { display: flex; align-items: center; gap: 13px; height: 54px; padding: 0 14px 6px; color: #616161; font-size: 24px; font-weight: 400; }
.chats h2 svg { width: 14px; height: 14px; color: #a0a0a0; }
.row { justify-content: flex-start; gap: 16px; width: 100%; height: 96px; padding: 0 32px; border-radius: 8px; text-align: left; }
.row.selected { background: #fff; }
.text { display: flex; flex: 1; flex-direction: column; min-width: 0; }
.line { display: flex; align-items: baseline; justify-content: space-between; gap: 16px; }
.line time, .preview { color: #616161; font-size: 24px; }
.preview .ja { font-size: 22px; }
.selected time { color: #242424; }
.name, .preview { overflow: hidden; white-space: nowrap; }

.conversation { display: flex; flex: 1; flex-direction: column; min-width: 0; }
.conv-head { display: flex; align-items: center; height: 122px; padding-left: 40px; border-bottom: 2px solid #ebebeb; }
.conv-head h2 { margin: 0 24px 0 24px; font-size: 35px; font-weight: 700; white-space: nowrap; }
.conv-tab { height: 120px; border-top: 6px solid transparent; border-bottom: 6px solid #6264a7; font-size: 28px; font-weight: 600; }
.conv-more { gap: 12px; margin-left: 32px; color: #616161; }
.conv-more svg { width: 16px; height: 16px; }
.messages { display: flex; flex: 1; flex-direction: column; align-items: flex-end; padding: 72px 144px 0; }
.messages time { margin-bottom: 4px; color: #616161; font-size: 24px; line-height: 28px; }
.message { display: flex; align-items: flex-end; gap: 12px; margin-right: -36px; }
.message p { padding: 20px 32px; border-radius: 12px; background: #e7e6f6; }
.message svg { width: 24px; height: 24px; margin-bottom: 4px; color: #4f5095; }
.composer { padding: 0 144px 34px; }
.composer input { display: block; width: 100%; height: 86px; padding: 0 24px; border: 2px solid #e6e6e6; border-radius: 8px; outline: 0; background: #fff; }
.composer input::placeholder { color: #616161; opacity: 1; }
.tools { display: flex; gap: 32px; margin-top: 16px; padding: 0 16px; color: #424242; }
.tools button { width: 32px; height: 34px; }
.gif { display: flex; align-items: center; justify-content: center; width: 32px; height: 28px; border: 2px solid; border-radius: 5px; font-size: 13px; line-height: 16px; font-weight: 700; }

.overlay { position: absolute; inset: 0; display: grid; place-items: center; background: rgba(36, 36, 36, 0.75); }
.dialog { width: 50%; min-height: 594px; padding: 54px 64px; border-radius: 14px; background: #fff; box-shadow: 0 8px 40px rgba(0, 0, 0, 0.25); }
.dialog-head { display: flex; align-items: center; }
.dialog-head h2 { flex: 1; margin-left: 24px; font-size: 26px; font-weight: 600; }
.dialog-head button { width: 64px; height: 64px; color: #424242; }
.dialog-head button svg { width: 32px; height: 32px; }
.app-icon { display: flex; align-items: center; justify-content: center; width: 64px; height: 64px; border: 2px solid #dcdfe1; border-radius: 8px; background: #f2f4f7; color: #16213a; }
.app-icon svg { width: 32px; height: 32px; }
.error { display: flex; align-items: center; justify-content: center; gap: 8px; margin-top: 22px; color: #b73b4f; }

.sidebar { display: flex; flex-direction: column; align-items: center; width: 88px; padding-top: 4px; }
.sidebar button { width: 88px; height: 80px; }
.sidebar button svg { width: 33px; height: 33px; }
.sidebar hr { width: 56px; height: 2px; margin: 24px 0 22px; border: 0; background: #6e6e6e; }
.sidebar .add svg { width: 26px; height: 26px; }
.sidebar .bottom { margin: auto 0 0; }
.sidebar .settings { height: 88px; }
</style>
